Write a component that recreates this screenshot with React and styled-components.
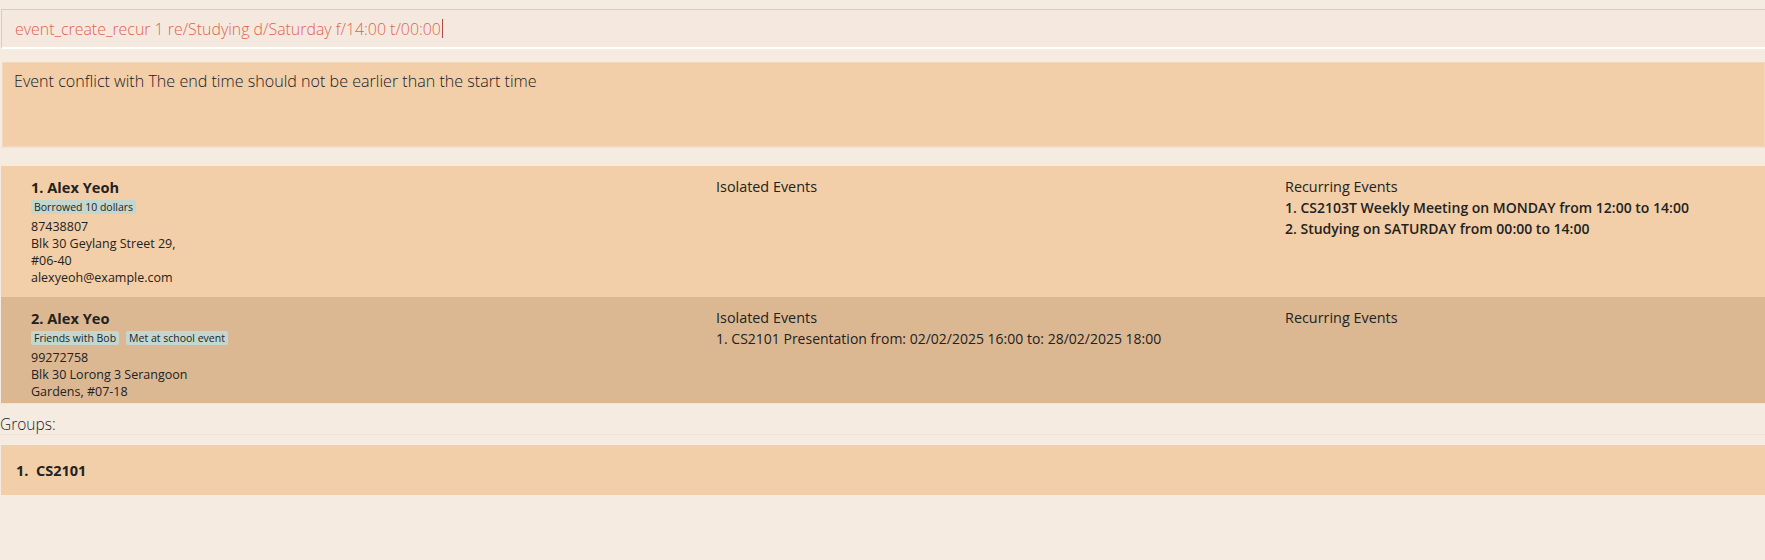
import React from "react";
import styled, { createGlobalStyle } from "styled-components";

const Global = createGlobalStyle`
  html, body { margin: 0; padding: 0; background: #f5ebe0; }
  body { font-family: "Open Sans", "Noto Sans", sans-serif; color: #1f1f1f; }
  * { box-sizing: border-box; }
`;

const Page = styled.div`
  width: 1765px;
  height: 560px;
  overflow: hidden;
  display: flex;
  flex-direction: column;
  background: #f5ebe0;
`;

const Band = styled.div`
  height: ${(p) => p.$h}px;
  border-top: 1px solid ${(p) => (p.$line ? "#efe2d6" : "transparent")};
`;

const CommandBox = styled.div`
  margin-left: 1px;
  height: 40px;
  border-top: 1px solid #efc8a0;
  border-left: 1px solid #efc8a0;
  border-bottom: 2px solid #ffffff;
  background: #f5e9df;
  display: flex;
  align-items: center;
  padding-left: 13px;
  font-size: 15.9px;
  font-weight: 300;
  color: #de6450;
`;

const Caret = styled.span`
  display: inline-block;
  width: 1px;
  height: 19px;
  background: #b5484a;
  margin-left: 1px;
  vertical-align: middle;
`;

const ResultBox = styled.div`
  margin-left: 2px;
  height: 85px;
  background: #f2cfa8;
  border: 1px solid #f3d8bb;
  padding: 7px 11px;
  font-size: 16.1px;
  font-weight: 300;
  color: #1a1a24;
`;

const PersonList = styled.div`
  height: 237px;
  overflow: hidden;
  margin-left: 1px;
`;

const Card = styled.div`
  display: grid;
  grid-template-columns: 685px 569px 1fr;
  padding: 11px 0 0 30px;
  height: ${(p) => p.$h}px;
  background: ${(p) => (p.$alt ? "#dcb892" : "#f2cfa8")};
`;

const Info = styled.div`
  display: flex;
  flex-direction: column;
  align-items: flex-start;
`;

const Name = styled.div`
  font-size: 14.6px;
  font-weight: 700;
  line-height: 20px;
  color: #222;
`;

const Tags = styled.div`
  display: flex;
  gap: 7px;
  margin: 3px 0 4px;
`;

const Tag = styled.span`
  background: #c3d7cf;
  border-radius: 2px;
  padding: 0 3px;
  height: 14px;
  line-height: 14px;
  font-size: 10.5px;
  color: #1e1e1e;
`;

const Line = styled.div`
  font-size: 12.5px;
  line-height: 17px;
  color: #222;
`;

const EventCol = styled.div`
  display: flex;
  flex-direction: column;
`;

const EventTitle = styled.div`
  font-size: 14.4px;
  font-weight: 500;
  line-height: 20px;
  color: #222;
`;

const EventItem = styled.div`
  font-size: 14px;
  font-weight: ${(p) => (p.$strong ? 600 : 400)};
  line-height: 21px;
  color: #222;
`;

const GroupsLabel = styled.div`
  height: 21px;
  line-height: 21px;
  font-size: 15.5px;
  font-weight: 300;
  color: #1a1a2a;
  border-bottom: 1px solid #efe2d6;
`;

const GroupCard = styled.div`
  margin-left: 1px;
  height: 50px;
  background: #f2cfa8;
  display: flex;
  align-items: center;
  padding-left: 15px;
  font-size: 14.5px;
  font-weight: 700;
  color: #222;
  white-space: pre;
`;

const persons = [
  {
    name: "1. Alex Yeoh",
    tags: ["Borrowed 10 dollars"],
    lines: ["87438807", "Blk 30 Geylang Street 29,", "#06-40", "alexyeoh@example.com"],
    isolated: [],
    recurring: [
      "1. CS2103T Weekly Meeting on MONDAY from 12:00 to 14:00",
      "2. Studying on SATURDAY from 00:00 to 14:00",
    ],
    h: 131,
  },
  {
    name: "2. Alex Yeo",
    tags: ["Friends with Bob", "Met at school event"],
    lines: ["99272758", "Blk 30 Lorong 3 Serangoon", "Gardens, #07-18"],
    isolated: ["1. CS2101 Presentation from: 02/02/2025 16:00 to: 28/02/2025 18:00"],
    recurring: [],
    h: 131,
    alt: true,
  },
];

export default function App() {
  return (
    <Page>
      <Global />
      <Band $h={9} />
      <CommandBox>
        event_create_recur 1 re/Studying d/Saturday f/14:00 t/00:00
        <Caret />
      </CommandBox>
      <Band $h={13} />
      <ResultBox>Event conflict with The end time should not be earlier than the start time</ResultBox>
      <Band $h={19} $line />
      <PersonList>
        {persons.map((p) => (
          <Card key={p.name} $alt={p.alt} $h={p.h}>
            <Info>
              <Name>{p.name}</Name>
              <Tags>
                {p.tags.map((t) => (
                  <Tag key={t}>{t}</Tag>
                ))}
              </Tags>
              {p.lines.map((l) => (
                <Line key={l}>{l}</Line>
              ))}
            </Info>
            <EventCol>
              <EventTitle>Isolated Events</EventTitle>
              {p.isolated.map((e) => (
                <EventItem key={e}>{e}</EventItem>
              ))}
            </EventCol>
            <EventCol>
              <EventTitle>Recurring Events</EventTitle>
              {p.recurring.map((e) => (
                <EventItem key={e} $strong>{e}</EventItem>
              ))}
            </EventCol>
          </Card>
        ))}
      </PersonList>
      <Band $h={11} $line />
      <GroupsLabel>Groups:</GroupsLabel>
      <Band $h={10} />
      <GroupCard>{"1.  CS2101"}</GroupCard>
    </Page>
  );
}
